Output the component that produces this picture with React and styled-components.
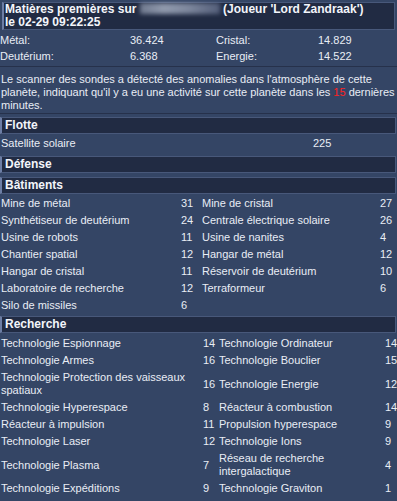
import React from "react";
import styled, { createGlobalStyle } from "styled-components";

const Global = createGlobalStyle`
  html, body { margin: 0; padding: 0; background: #344565; }
  body {
    font-family: "Liberation Sans", Tahoma, Arial, sans-serif;
    font-size: 11px;
    color: #e9edf5;
  }
`;

const Report = styled.div`
  width: 397px;
  padding-top: 2px;
  display: flex;
  flex-direction: column;
`;

const TitleBox = styled.div`
  margin: 0 2px;
  background: #212b43;
  border: 1px solid #48587a;
  border-left: 2px solid #6d7ea5;
  padding: 0 2px 0 1px;
  font-weight: bold;
  font-size: 12px;
  line-height: 13px;
  color: #f3f5fa;
`;

const Hidden = styled.span`
  display: inline-block;
  width: 80px;
  height: 11px;
  vertical-align: -1px;
  background: linear-gradient(90deg, #7d879c, #a4adbf 30%, #8e98ad 60%, #5c6783);
  filter: blur(2px);
  opacity: 0.85;
`;

const ResourceGrid = styled.div`
  display: grid;
  grid-template-columns: 130px 86px 102px 1fr;
  margin-top: 2px;
  line-height: 16px;
`;

const Resource = styled.div`
  white-space: nowrap;
`;

const Rule = styled.div`
  height: 0;
  border-top: 1px solid #26314b;
  margin-top: ${(p) => p.$top || 0}px;
`;

const Notice = styled.p`
  margin: 0;
  padding: 6px 1px 1px 1px;
  line-height: 13px;
`;

const Alert = styled.span`
  color: #ff2222;
`;

const Section = styled.section`
  margin-top: ${(p) => p.$gap}px;
  display: flex;
  flex-direction: column;
`;

const SectionTitle = styled.div`
  margin-right: 1px;
  height: 15px;
  line-height: 15px;
  background: #212b43;
  border: 1px solid #48587a;
  border-left: 2px solid #6d7ea5;
  padding-left: 3px;
  font-weight: bold;
  font-size: 12px;
  color: #f3f5fa;
`;

const Table = styled.div`
  display: grid;
  grid-template-columns: ${(p) => p.$cols};
  align-items: center;
  margin-top: ${(p) => p.$top || 1}px;
  line-height: 13px;
`;

const Cell = styled.div`
  padding: 2px 0 2px ${(p) => (p.$first ? 1 : 0)}px;
`;

const buildings = [
  ["Mine de métal", "31", "Mine de cristal", "27"],
  ["Synthétiseur de deutérium", "24", "Centrale électrique solaire", "26"],
  ["Usine de robots", "11", "Usine de nanites", "4"],
  ["Chantier spatial", "12", "Hangar de métal", "12"],
  ["Hangar de cristal", "11", "Réservoir de deutérium", "10"],
  ["Laboratoire de recherche", "12", "Terraformeur", "6"],
  ["Silo de missiles", "6", "", ""],
];

const research = [
  ["Technologie Espionnage", "14", "Technologie Ordinateur", "14"],
  ["Technologie Armes", "16", "Technologie Bouclier", "15"],
  ["Technologie Protection des vaisseaux spatiaux", "16", "Technologie Energie", "12"],
  ["Technologie Hyperespace", "8", "Réacteur à combustion", "14"],
  ["Réacteur à impulsion", "11", "Propulsion hyperespace", "9"],
  ["Technologie Laser", "12", "Technologie Ions", "9"],
  ["Technologie Plasma", "7", "Réseau de recherche intergalactique", "4"],
  ["Technologie Expéditions", "9", "Technologie Graviton", "1"],
];

function Rows({ items }) {
  return items.map((r, i) => (
    <React.Fragment key={i}>
      <Cell $first>{r[0]}</Cell>
      <Cell>{r[1]}</Cell>
      <Cell>{r[2]}</Cell>
      <Cell>{r[3]}</Cell>
    </React.Fragment>
  ));
}

export default function App() {
  return (
    <>
      <Global />
      <Report>
        <TitleBox>
          Matières premières sur <Hidden /> (Joueur 'Lord Zandraak')
          <br />
          le 02-29 09:22:25
        </TitleBox>

        <ResourceGrid>
          <Resource>Métal:</Resource>
          <Resource>36.424</Resource>
          <Resource>Cristal:</Resource>
          <Resource>14.829</Resource>
          <Resource>Deutérium:</Resource>
          <Resource>6.368</Resource>
          <Resource>Energie:</Resource>
          <Resource>14.522</Resource>
        </ResourceGrid>

        <Rule $top={2} />
        <Notice>
          Le scanner des sondes a détecté des anomalies dans l'atmosphère de cette
          planète, indiquant qu'il y a eu une activité sur cette planète dans les{" "}
          <Alert>15</Alert> dernières minutes.
        </Notice>
        <Rule />

        <Section $gap={3}>
          <SectionTitle>Flotte</SectionTitle>
          <Table $cols="313px 1fr">
            <Cell $first>Satellite solaire</Cell>
            <Cell>225</Cell>
          </Table>
        </Section>

        <Section $gap={4}>
          <SectionTitle>Défense</SectionTitle>
        </Section>

        <Section $gap={4}>
          <SectionTitle>Bâtiments</SectionTitle>
          <Table $cols="181px 21px 178px 1fr">
            <Rows items={buildings} />
          </Table>
        </Section>

        <Section $gap={2}>
          <SectionTitle>Recherche</SectionTitle>
          <Table $cols="203px 16px 166px 1fr" $top={2}>
            <Rows items={research} />
          </Table>
        </Section>
      </Report>
    </>
  );
}
